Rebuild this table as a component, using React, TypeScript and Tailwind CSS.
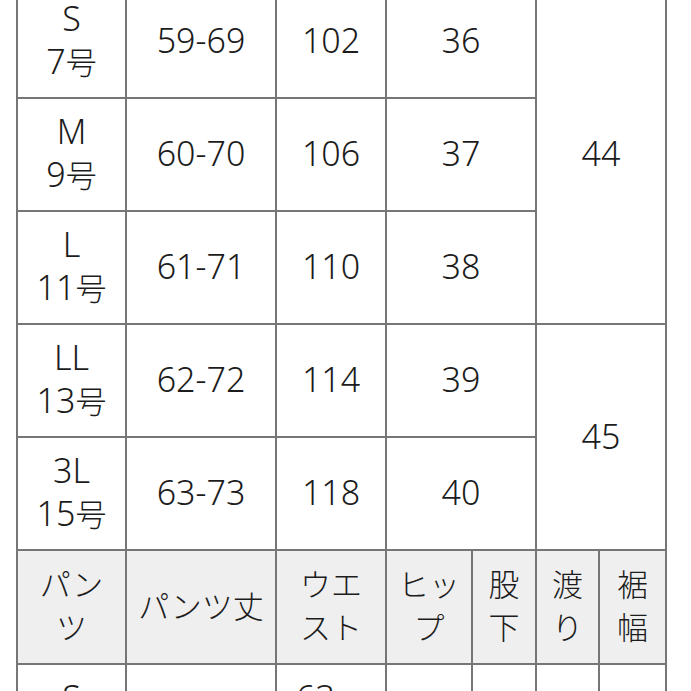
import React from 'react';

type Row = {
  size: string;
  no: string;
  length: string;
  waist: string;
  hip: string;
  rise?: { value: string; span: number };
};

const rows: Row[] = [
  { size: 'S', no: '7', length: '59-69', waist: '102', hip: '36', rise: { value: '44', span: 3 } },
  { size: 'M', no: '9', length: '60-70', waist: '106', hip: '37' },
  { size: 'L', no: '11', length: '61-71', waist: '110', hip: '38' },
  { size: 'LL', no: '13', length: '62-72', waist: '114', hip: '39', rise: { value: '45', span: 2 } },
  { size: '3L', no: '15', length: '63-73', waist: '118', hip: '40' },
];

const cell = 'border-2 border-[#767676] text-center align-middle p-0 pb-[2px]';

function Go() {
  return <span className="text-[31px]">号</span>;
}

export default function App() {
  return (
    <div
      className="w-[691px] h-[691px] overflow-hidden bg-white text-[#1c1c1c] text-[34px] leading-[43px] font-light"
      style={{ fontFamily: '"Noto Sans", "Noto Sans CJK JP", sans-serif' }}
    >
      <table className="-mt-[16px] ml-[16px] w-[651px] table-fixed border-collapse">
        <colgroup>
          <col className="w-[109px]" />
          <col className="w-[150px]" />
          <col className="w-[110px]" />
          <col className="w-[86px]" />
          <col className="w-[64px]" />
          <col className="w-[63px]" />
          <col className="w-[67px]" />
        </colgroup>
        <tbody>
          {rows.map((r) => (
            <tr key={r.size} className="h-[113px]">
              <td className={cell}>
                {r.size}
                <br />
                {r.no}
                <Go />
              </td>
              <td className={cell}>{r.length}</td>
              <td className={cell}>{r.waist}</td>
              <td className={cell} colSpan={2}>
                {r.hip}
              </td>
              {r.rise && (
                <td className={cell} colSpan={2} rowSpan={r.rise.span}>
                  {r.rise.value}
                </td>
              )}
            </tr>
          ))}
          <tr className="h-[114px] bg-[#efefef] text-[31px]">
            <td className={cell}>
              パン
              <br />ツ
            </td>
            <td className={cell}>パンツ丈</td>
            <td className={cell}>
              ウエ
              <br />
              スト
            </td>
            <td className={cell}>
              ヒッ
              <br />プ
            </td>
            <td className={cell}>
              股
              <br />下
            </td>
            <td className={cell}>
              渡
              <br />り
            </td>
            <td className={cell}>
              裾
              <br />幅
            </td>
          </tr>
          <tr className="h-[113px]">
            <td className={cell}>
              S
              <br />
              7<Go />
            </td>
            <td className={cell}>95</td>
            <td className={cell}>
              63<span className="text-[31px]">～</span>
              <br />
              67
            </td>
            <td className={cell}>96</td>
            <td className={cell}>68</td>
            <td className={cell}>30</td>
            <td className={cell}>22</td>
          </tr>
        </tbody>
      </table>
    </div>
  );
}
